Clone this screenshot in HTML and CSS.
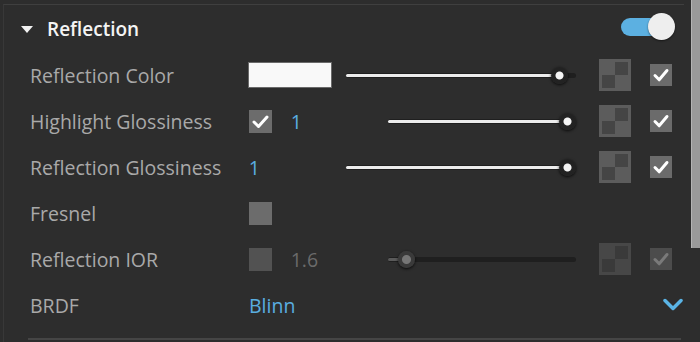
FILE: index.html
```html
<!doctype html>
<html>
  <head>
    <meta charset="utf-8">
    <title>Reflection</title>
    <link rel="stylesheet" href="styles.css">
  </head>
  <body>
    <div class="frame">
      <div class="panel">
        <div class="section-head">
          <span class="caret"></span>
          <span class="section-title">Reflection</span>
          <span class="toggle on"><span class="toggle-knob"></span></span>
        </div>

        <div class="prop-row">
          <div class="prop-label">Reflection Color</div>
          <div class="prop-ctl">
            <span class="swatch"></span>
            <div class="slider">
              <span class="slider-fill" style="width: 213px"></span>
              <span class="slider-knob" style="left: 205px"></span>
            </div>
          </div>
          <span class="tex"><i></i><i></i><i></i><i></i></span>
          <span class="check on"><svg viewBox="0 0 22 22"><path d="M5 11.5l4.2 4.3L17 6.5"/></svg></span>
        </div>

        <div class="prop-row">
          <div class="prop-label">Highlight Glossiness</div>
          <div class="prop-ctl">
            <span class="box on"><svg viewBox="0 0 23 23"><path d="M5 12l4.5 4.5L18 7"/></svg></span>
            <span class="value after-box">1</span>
            <div class="slider short">
              <span class="slider-fill" style="width: 179px"></span>
              <span class="slider-knob" style="left: 171px"></span>
            </div>
          </div>
          <span class="tex"><i></i><i></i><i></i><i></i></span>
          <span class="check on"><svg viewBox="0 0 22 22"><path d="M5 11.5l4.2 4.3L17 6.5"/></svg></span>
        </div>

        <div class="prop-row">
          <div class="prop-label">Reflection Glossiness</div>
          <div class="prop-ctl">
            <span class="value">1</span>
            <div class="slider">
              <span class="slider-fill" style="width: 221px"></span>
              <span class="slider-knob" style="left: 213px"></span>
            </div>
          </div>
          <span class="tex"><i></i><i></i><i></i><i></i></span>
          <span class="check on"><svg viewBox="0 0 22 22"><path d="M5 11.5l4.2 4.3L17 6.5"/></svg></span>
        </div>

        <div class="prop-row">
          <div class="prop-label">Fresnel</div>
          <div class="prop-ctl">
            <span class="box"></span>
          </div>
          <span class="tex blank"></span>
          <span class="check blank"></span>
        </div>

        <div class="prop-row disabled">
          <div class="prop-label">Reflection IOR</div>
          <div class="prop-ctl">
            <span class="box"></span>
            <span class="value after-box">1.6</span>
            <div class="slider short">
              <span class="slider-fill" style="width: 18px"></span>
              <span class="slider-knob" style="left: 10px"></span>
            </div>
          </div>
          <span class="tex"><i></i><i></i><i></i><i></i></span>
          <span class="check on"><svg viewBox="0 0 22 22"><path d="M5 11.5l4.2 4.3L17 6.5"/></svg></span>
        </div>

        <div class="prop-row select-row">
          <div class="prop-label">BRDF</div>
          <div class="prop-select">
            <span class="value">Blinn</span>
            <svg class="chevron" viewBox="0 0 20 14"><path d="M2 2.5l8 8 8-8"/></svg>
          </div>
        </div>

        <div class="section-end"></div>
      </div>

      <div class="scrollbar"><div class="scroll-thumb"></div></div>
    </div>
  </body>
</html>
```

FILE: styles.css
```css
body {
  margin: 0;
  background: #2d2d2d;
  font-family: "Open Sans", "Noto Sans", sans-serif;
  color: #a9a9a9;
  overflow: hidden;
}

.frame {
  display: flex;
  height: 342px;
}

.panel {
  width: 680px;
  margin-top: 4px;
  margin-left: 3px;
  border-top: 1px solid #3f3f3f;
  border-left: 1px solid #383838;
}

/* header */

.section-head {
  display: flex;
  align-items: center;
  height: 47px;
  padding: 0 9px 0 17px;
}

.caret {
  width: 0;
  height: 0;
  border-left: 6px solid transparent;
  border-right: 6px solid transparent;
  border-top: 7px solid #f2f2f2;
  margin-top: 1px;
}

.section-title {
  margin-left: 14px;
  font-size: 19px;
  font-weight: 600;
  color: #f4f4f4;
}

.toggle {
  margin-left: auto;
  position: relative;
  width: 54px;
  height: 27px;
  margin-top: -5px;
}

.toggle.on::before {
  content: "";
  position: absolute;
  left: 0;
  top: 5px;
  width: 44px;
  height: 18px;
  border-radius: 9px;
  background: #5cb0e1;
}

.toggle-knob {
  position: absolute;
  right: 0;
  top: 0;
  width: 27px;
  height: 27px;
  border-radius: 50%;
  background: #eeeeee;
  box-shadow: 0 1px 2px rgba(0, 0, 0, 0.5);
}

/* rows */

.prop-row {
  display: flex;
  align-items: center;
  height: 46px;
  padding: 0 12px 0 26px;
}

.prop-label {
  width: 218px;
  font-size: 19.5px;
  white-space: nowrap;
}

.prop-ctl {
  width: 352px;
  display: flex;
  align-items: center;
}

.swatch {
  width: 82px;
  height: 24px;
  background: #f9f9f9;
  border: 1px solid #6a6a6a;
}

.value {
  font-size: 19.5px;
  color: #5aaee0;
  margin-left: 1px;
}

.value.after-box {
  margin-left: 19px;
}

.box {
  display: block;
  width: 23px;
  height: 23px;
  margin-left: 1px;
  background: #6c6c6c;
}

.box svg, .check svg {
  display: block;
  width: 100%;
  height: 100%;
  fill: none;
  stroke: #ffffff;
  stroke-width: 3;
  stroke-linecap: round;
  stroke-linejoin: round;
}

/* slider */

.slider {
  position: relative;
  width: 230px;
  height: 5px;
  margin-left: auto;
  margin-right: 23px;
  border-radius: 3px;
  background: #1f1f1f;
}

.slider.short {
  width: 188px;
}

.slider-fill {
  position: absolute;
  left: 0;
  top: 1px;
  height: 3px;
  border-radius: 2px;
  background: #ececec;
}

.slider-knob {
  position: absolute;
  top: -6px;
  width: 17px;
  height: 17px;
  border-radius: 50%;
  background: radial-gradient(circle, #f4f4f4 0 3.5px, #222222 4.5px);
  box-shadow: 0 1px 3px rgba(0, 0, 0, 0.8);
}

/* texture slot and enable checkbox */

.tex {
  display: grid;
  grid-template-columns: 13px 13px;
  grid-template-rows: 13px 13px;
  padding: 3px;
  width: 26px;
  height: 26px;
  background: #5c5c5c;
}

.tex i:nth-child(2), .tex i:nth-child(3) {
  background: #454545;
}

.tex.blank, .check.blank {
  background: none;
}

.check {
  display: block;
  width: 22px;
  height: 22px;
  margin-left: 19px;
  background: #6b6b6b;
}

/* disabled row */

.disabled .box {
  background: #525252;
}

.disabled .value {
  color: #6a6a6a;
}

.disabled .slider-fill {
  background: #5a5a5a;
}

.disabled .slider-knob {
  background: radial-gradient(circle, #767676 0 4px, #3a3a3a 5px);
}

.disabled .tex {
  background: #474747;
}

.disabled .tex i:nth-child(2), .disabled .tex i:nth-child(3) {
  background: #3a3a3a;
}

.disabled .check {
  background: #4c4c4c;
}

.disabled .check svg {
  stroke: #7a7a7a;
}

/* dropdown */

.select-row {
  padding-right: 1px;
}

.prop-select {
  flex: 1;
  display: flex;
  align-items: center;
  justify-content: space-between;
}

.chevron {
  width: 20px;
  height: 14px;
  fill: none;
  stroke: #5ab4e6;
  stroke-width: 3.5;
  stroke-linecap: round;
  stroke-linejoin: round;
}

.section-end {
  margin: 10px 0 0 24px;
  width: 653px;
  height: 2px;
  background: #454545;
}

/* scrollbar */

.scrollbar {
  margin-left: 7px;
  width: 9px;
}

.scroll-thumb {
  height: 248px;
  background: #9a9a9a;
  border-left: 1px solid #b4b4b4;
}
```
